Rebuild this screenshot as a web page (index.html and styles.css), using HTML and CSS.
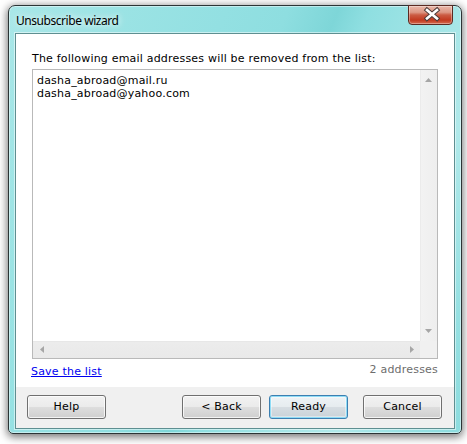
FILE: index.html
```html
<!DOCTYPE html>
<html>
<head>
<meta charset="utf-8">
<title>Unsubscribe wizard</title>
<link rel="stylesheet" href="styles.css">
</head>
<body>
<div class="window">
  <div class="titlebar">
    <span class="title">Unsubscribe wizard</span>
    <button class="close" aria-label="Close">
      <svg width="45" height="20" viewBox="0 0 45 20">
        <path d="M19 5 L29 13.5 M29 5 L19 13.5" stroke="#4b3a38" stroke-width="4.6" stroke-linecap="square" fill="none"/>
        <path d="M19 5 L29 13.5 M29 5 L19 13.5" stroke="#ffffff" stroke-width="2.6" stroke-linecap="square" fill="none"/>
      </svg>
    </button>
  </div>
  <div class="client">
    <div class="content">
      <p class="intro">The following email addresses will be removed from the list:</p>
      <div class="listbox">
        <div class="items">
          <div>dasha_abroad@mail.ru</div>
          <div>dasha_abroad@yahoo.com</div>
        </div>
        <div class="vscroll">
          <span class="sbtn"><svg width="7" height="4" viewBox="0 0 7 4"><polygon points="0,4 3.5,0 7,4" fill="#a6a6a6"/></svg></span>
          <span class="track"></span>
          <span class="sbtn"><svg width="7" height="4" viewBox="0 0 7 4"><polygon points="0,0 7,0 3.5,4" fill="#a6a6a6"/></svg></span>
        </div>
        <div class="hscroll">
          <span class="sbtn"><svg width="4" height="7" viewBox="0 0 4 7"><polygon points="4,0 4,7 0,3.5" fill="#a6a6a6"/></svg></span>
          <span class="track"></span>
          <span class="sbtn"><svg width="4" height="7" viewBox="0 0 4 7"><polygon points="0,0 4,3.5 0,7" fill="#a6a6a6"/></svg></span>
        </div>
        <div class="corner"></div>
      </div>
      <div class="status">
        <a class="save-link" href="#">Save the list</a>
        <span class="count">2 addresses</span>
      </div>
    </div>
    <div class="footer">
      <button class="btn">Help</button>
      <button class="btn back">&lt; Back</button>
      <button class="btn default">Ready</button>
      <button class="btn cancel">Cancel</button>
    </div>
  </div>
</div>
</body>
</html>
```

FILE: styles.css
```css
html, body {
  margin: 0;
  padding: 0;
  background: #ffffff;
}

body {
  width: 467px;
  height: 444px;
  overflow: hidden;
  font-family: "DejaVu Sans", Verdana, sans-serif;
  font-size: 11px;
  letter-spacing: 0.2px;
  color: #000;
}

.window {
  box-sizing: border-box;
  width: 454px;
  height: 429px;
  margin: 5px 0 0 8px;
  border: 1px solid #2c3536;
  border-radius: 7px 7px 5px 5px;
  padding: 0 6px 4px 6px;
  display: flex;
  flex-direction: column;
  background:
    linear-gradient(112deg,
      #a9e7e8 0%,
      #9be3e4 18%,
      #93e0e2 35%,
      #8edee0 45%,
      #7ed6d8 53%,
      #8fdfe1 58%,
      #a3e5e6 70%,
      #b0e9ea 80%,
      #95e0e2 92%,
      #8cdcde 100%);
  box-shadow:
    inset 0 0 0 1px rgba(255, 255, 255, 0.45),
    0 2px 9px 1px rgba(0, 0, 0, 0.55);
}

.titlebar {
  height: 27px;
  flex: none;
  display: flex;
  align-items: flex-start;
  justify-content: space-between;
  padding-left: 1px;
}

.title {
  font-family: "Noto Sans", "Open Sans", sans-serif;
  font-size: 12px;
  letter-spacing: -0.45px;
  line-height: 16px;
  margin-top: 7px;
  color: #000;
  text-shadow: 0 0 6px rgba(255, 255, 255, 0.9), 0 0 10px rgba(255, 255, 255, 0.6);
}

.close {
  box-sizing: border-box;
  width: 45px;
  height: 20px;
  margin: -1px 2px 0 0;
  padding: 0;
  border: 1px solid #5b2a22;
  border-radius: 0 0 4px 4px;
  background: linear-gradient(to bottom,
    #e9b7a9 0%,
    #dd9784 35%,
    #cb5b43 50%,
    #c2391f 78%,
    #d56b50 100%);
  box-shadow: inset 0 0 0 1px rgba(255, 255, 255, 0.35);
  display: block;
}

.close svg {
  display: block;
  margin: -1px 0 0 -1px;
}

.client {
  flex: 1;
  display: flex;
  flex-direction: column;
  border: 1px solid #5e8f91;
  background: #ffffff;
  box-shadow: 0 0 0 1px rgba(255, 255, 255, 0.5);
}

.content {
  flex: 1;
  display: flex;
  flex-direction: column;
  padding: 18px 16px 0 16px;
}

.intro {
  margin: 0;
  line-height: 13px;
  white-space: nowrap;
}

.listbox {
  box-sizing: border-box;
  margin-top: 4px;
  height: 290px;
  border: 1px solid #b9b9b9;
  display: grid;
  grid-template-columns: 1fr 17px;
  grid-template-rows: 1fr 17px;
  background: #fff;
}

.items {
  padding: 4px 0 0 4px;
  line-height: 13px;
}

.vscroll {
  display: flex;
  flex-direction: column;
  background: linear-gradient(to right, #e4e4e4 0, #f2f2f2 1px, #eeeeee 100%);
}

.hscroll {
  display: flex;
  background: linear-gradient(to bottom, #e2e2e2 0, #ececec 1px, #e9e9e9 100%);
}

.sbtn {
  width: 17px;
  height: 17px;
  flex: none;
  display: flex;
  align-items: center;
  justify-content: center;
}

.vscroll .sbtn:first-child svg {
  margin-top: 2px;
}

.vscroll .sbtn:last-child svg {
  margin-top: -3px;
}

.track {
  flex: 1;
}

.corner {
  background: #f0f0f0;
}

.status {
  margin-top: 4px;
  display: flex;
  justify-content: space-between;
  align-items: flex-start;
  line-height: 13px;
}

.save-link {
  color: #0000f0;
  text-decoration: underline;
  padding: 2px 0 0 0;
  margin-left: -1px;
}

.count {
  color: #6d6d6d;
}

.footer {
  flex: none;
  height: 41px;
  box-sizing: border-box;
  background: #f0f0f0;
  padding: 8px 12px 0 11px;
  display: flex;
  align-items: flex-start;
}

.btn {
  box-sizing: border-box;
  width: 79px;
  height: 24px;
  padding: 0;
  border: 1px solid #707070;
  border-radius: 3px;
  font-family: "DejaVu Sans", Verdana, sans-serif;
  font-size: 11px;
  letter-spacing: 0.2px;
  line-height: 22px;
  color: #000;
  background: linear-gradient(to bottom,
    #f2f2f2 0%,
    #ebebeb 48%,
    #dddddd 52%,
    #cfcfcf 100%);
  box-shadow: inset 0 0 0 1px rgba(255, 255, 255, 0.75);
}

.back {
  margin-left: auto;
}

.default {
  margin-left: 8px;
  border-color: #3c7fb1;
  box-shadow: inset 0 0 0 1px #8fdcf6, inset 0 0 0 2px rgba(255, 255, 255, 0.4);
  background: linear-gradient(to bottom,
    #eef3f6 0%,
    #e6ecef 48%,
    #d6dde2 52%,
    #c9d2d8 100%);
}

.cancel {
  margin-left: 15px;
}
```
